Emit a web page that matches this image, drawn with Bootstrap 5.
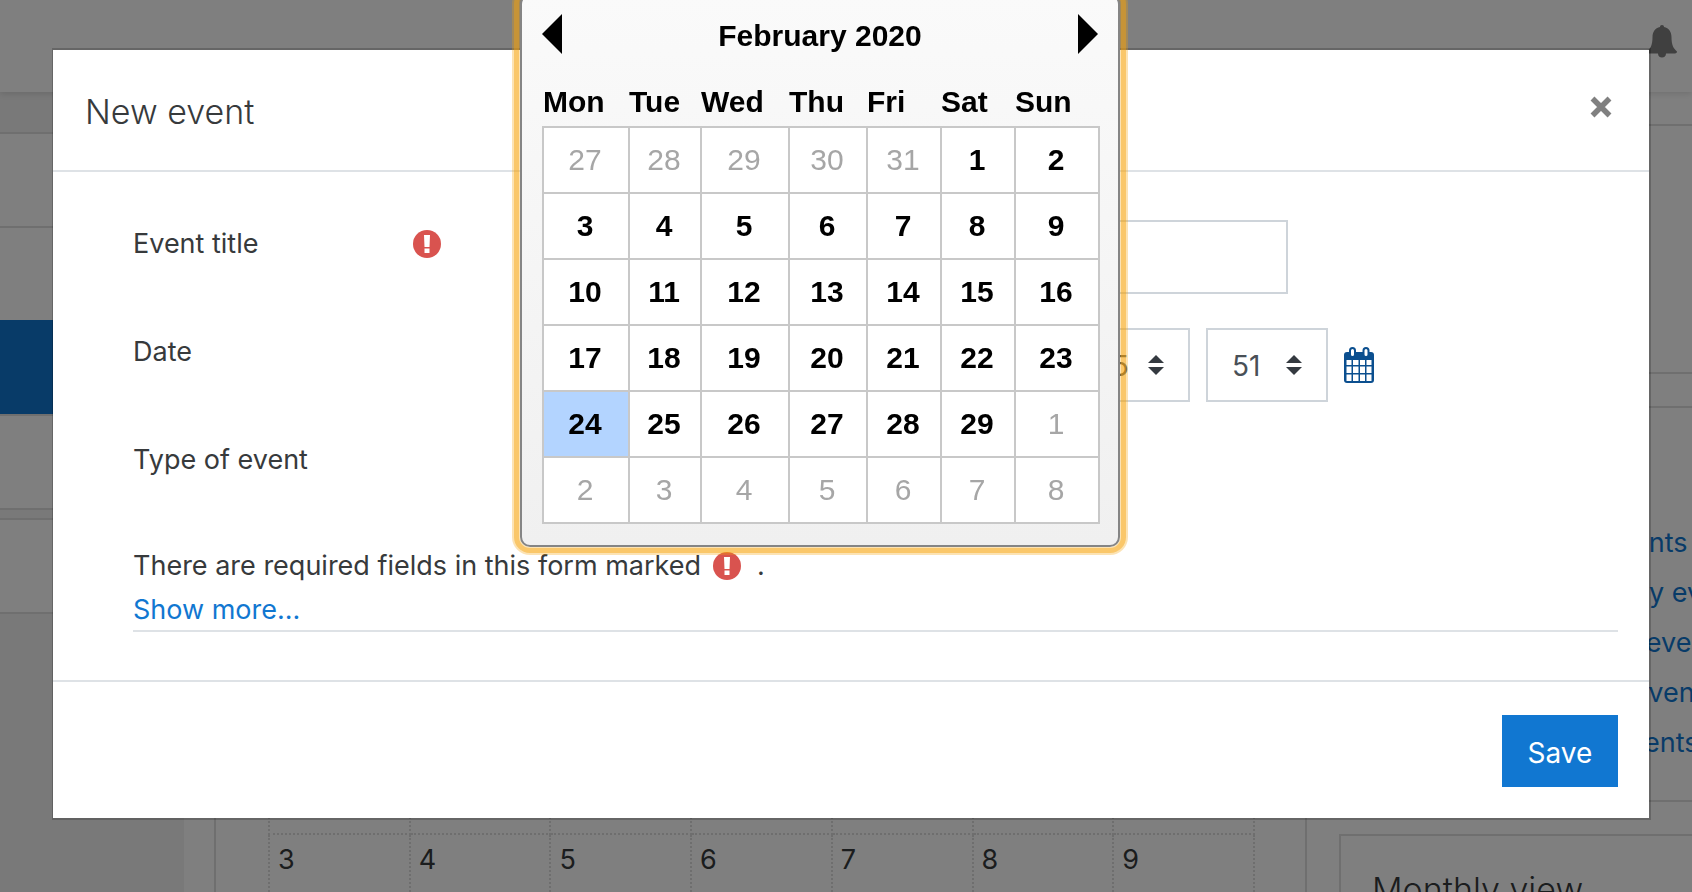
<!DOCTYPE html>
<html lang="en">
<head>
<meta charset="utf-8">
<meta name="viewport" content="width=device-width, initial-scale=1">
<title>New event</title>
<link href="https://cdn.jsdelivr.net/npm/bootstrap@5.3.0/dist/css/bootstrap.min.css" rel="stylesheet">
<style>
  :root { --line: #dfdfdf; --field: #ced4da; --brand: #1177d1; --ink: #373a3c; }
  body { font: 400 27px/44px Inter, "Liberation Sans", sans-serif; color: var(--ink); min-height: 100vh; overflow: hidden; background: #fff; }
  a { color: var(--brand); text-decoration: none; }
  .light-title { font-size: 34px; line-height: 44px; font-weight: 300; color: var(--ink); }

  /* page behind the dialog */
  .page { height: 100vh; overflow: hidden; }
  .topbar { flex: 0 0 92px; padding: 24px 14px; background: #fff; box-shadow: 0 2px 6px rgba(0,0,0,.12); position: relative; align-items: flex-start; }
  .drawer { flex: 0 0 184px; background: #f2f2f2; padding-top: 40px; }
  .drawer a { display: block; height: 94px; background: #fff; border-top: 2px solid var(--line); }
  .drawer a.current { background: var(--brand); border-color: var(--brand); }
  .drawer .section-end { border-bottom: 2px solid var(--line); height: 96px; }
  .drawer .section-end + a { margin-top: 8px; }
  .main-box { border: 2px solid var(--line); border-bottom: 0; margin: 32px 32px 0 30px; padding: 32px 50px 0 52px; }
  .month { table-layout: fixed; width: 100%; border-collapse: collapse; }
  .month th { height: 112px; }
  .month td { border: 2px dotted #dcdcdc; height: 141px; padding: 3px 8px; vertical-align: top; }
  .side { flex: 0 0 385px; min-width: 0; margin-right: -32px; padding-top: 32px; }
  .side-box { border: 2px solid var(--line); padding: 32px 31px; margin-bottom: 32px; white-space: nowrap; overflow: hidden; }
  .side-first { height: 250px; }
  .side-keys { height: 396px; padding-top: 110px; }
  .side-keys a { display: block; line-height: 50px; padding-left: 112px; }
  .shade { background: rgba(0,0,0,.5); }

  /* dialog */
  .event-dialog { max-width: none; margin: 48px 41px 0 52px; }
  .event-box { border: 2px solid rgba(0,0,0,.2); border-left-width: 1px; border-radius: 0; color: var(--ink); }
  .event-head { padding: 38px 24px 36px 32px; border-bottom: 2px solid #dee2e6; border-radius: 0; align-items: flex-start; height: 122px; }
  .event-head .light-title { padding-top: 2px; }
  .event-body { padding: 48px 31px 48px 80px; }
  .field-row { display: flex; min-height: 74px; margin-bottom: 34px; }
  .field-name { flex: 0 0 308px; margin-right: 105px; padding-top: 2px; height: 46px; }
  .box-field { border: 2px solid var(--field); border-radius: 0; height: 74px; color: #495057; font-size: 28px; background-color: #fff; }
  .title-field { width: 742px; }
  select.box-field { appearance: none; padding: 2px 24px 0; width: 122px;
    background-image: url("data:image/svg+xml,%3Csvg xmlns='http://www.w3.org/2000/svg' viewBox='0 0 16 20'%3E%3Cpath fill='%23343a40' d='M8 0L0 8h16zM8 20l8-8H0z'/%3E%3C/svg%3E");
    background-repeat: no-repeat; background-position: right 24px center; background-size: 16px 20px; }
  select.month-field { width: 216px; }
  select.year-field { width: 136px; }
  .plain-btn { border: 0; background: none; padding: 0; display: block; line-height: 0; }
  .notes { border-bottom: 2px solid #dee2e6; height: 88px; }
  .event-foot { padding: 33px 31px 31px; border-top: 2px solid #dee2e6; border-radius: 0; }
  .save-btn { background: var(--brand); border: 0; border-radius: 0; color: #fff; font-size: 28px; height: 72px; min-width: 116px; padding: 4px 20px 0; }

  /* date picker lying over the dialog */
  .picker { position: absolute; top: -6px; left: 520px; z-index: 1060; width: 600px; padding: 18px 20px 21px;
    font-family: "Liberation Sans", Arial, sans-serif; font-size: 30px; line-height: 34px; color: #000;
    border: 2px solid #858585; border-radius: 10px; background: linear-gradient(#fafafa, #f0f0f0);
    box-shadow: 0 0 0 8px rgba(245,163,7,.3); outline: 5px solid rgba(245,163,7,.43); outline-offset: 1px; }
  .picker-head { height: 40px; margin-bottom: 29px; font-weight: 700; }
  .picker-head span { padding-top: 4px; }
  .picker-days { table-layout: fixed; width: 100%; border-collapse: collapse; }
  .picker-days th { padding: 2px 0 0; height: 44px; vertical-align: top; text-align: left; }
  .picker-days td { border: 2px solid #c8c8c8; background: #fff; height: 66px; padding: 0 2px 0 0; text-align: center; font-weight: 700; }
  .picker-days td.off { font-weight: 400; color: #a6a6a6; }
  .picker-days td.picked { background: #b3d4ff; }
</style>
</head>
<body>

<div class="page d-flex flex-column">
  <header class="topbar d-flex justify-content-end">
    <button class="plain-btn" type="button" aria-label="Notifications">
      <svg width="32" height="34" viewBox="0 0 32 34" fill="#808080"><path d="M16 1c1.300 0 2 .8 2 2 5 1 7.500 5 7.500 10 0 8 2 11.500 5.500 14.500 0 1.200-.8 2-2 2h-9c0 2.500-1.600 4-4 4s-4-1.500-4-4H3c-1.200 0-2-.8-2-2C4.500 24.500 6.500 21 6.500 13c0-5 2.500-9 7.500-10 0-1.200.7-2 2-2z"/></svg>
    </button>
  </header>
  <div class="d-flex flex-grow-1">
    <nav class="drawer" aria-label="Site">
      <a href="#"></a><a href="#"></a><a href="#" class="current"></a><a href="#" class="section-end"></a><a href="#" class="section-end"></a>
    </nav>
    <main class="main-box flex-grow-1">
      <table class="month">
        <thead><tr><th></th><th></th><th></th><th></th><th></th><th></th><th></th></tr></thead>
        <tbody>
          <tr><td></td><td></td><td></td><td></td><td></td><td></td><td></td></tr>
          <tr><td></td><td></td><td></td><td></td><td></td><td></td><td></td></tr>
          <tr><td></td><td></td><td></td><td></td><td></td><td></td><td></td></tr>
          <tr><td></td><td></td><td></td><td></td><td></td><td></td><td></td></tr>
          <tr><td>3</td><td>4</td><td>5</td><td>6</td><td>7</td><td>8</td><td>9</td></tr>
        </tbody>
      </table>
    </main>
    <aside class="side">
      <section class="side-box side-first"></section>
      <section class="side-box side-keys">
        <a href="#">Hide site events</a>
        <a href="#">Hide category events</a>
        <a href="#">Hide course events</a>
        <a href="#">Hide group events</a>
        <a href="#">Hide user events</a>
      </section>
      <section class="side-box">
        <h2 class="light-title">Monthly view</h2>
      </section>
    </aside>
  </div>
</div>

<div class="modal shade d-block" tabindex="-1" role="dialog" aria-labelledby="dlg-title">
  <div class="modal-dialog event-dialog">
    <form class="modal-content event-box">
      <div class="modal-header event-head">
        <h1 class="light-title m-0" id="dlg-title">New event</h1>
        <button type="button" class="plain-btn" aria-label="Close">
          <svg width="48" height="40" viewBox="0 0 48 40"><path d="M15.500 10.500l17 17m0-17l-17 17" stroke="#808080" stroke-width="5.500" fill="none"/></svg>
        </button>
      </div>
      <div class="modal-body event-body">
        <div class="field-row">
          <div class="field-name d-flex justify-content-between align-items-center">
            <label for="ev-title">Event title</label>
            <svg width="28" height="28" viewBox="0 0 28 28" role="img" aria-label="Required"><circle cx="14" cy="14" r="14" fill="#d9534f"/><path fill="#fff" d="M11 5h6l-.5 12h-5zM11.500 18.500h5v4.500h-5z"/></svg>
          </div>
          <input class="box-field title-field" id="ev-title" type="text">
        </div>
        <div class="field-row">
          <div class="field-name"><label for="ev-day">Date</label></div>
          <div class="d-flex gap-3 align-items-center">
            <select class="box-field" id="ev-day" aria-label="Day"><option>24</option></select>
            <select class="box-field month-field" aria-label="Month"><option>February</option></select>
            <select class="box-field year-field" aria-label="Year"><option>2020</option></select>
            <select class="box-field" aria-label="Hour"><option>05</option></select>
            <select class="box-field" aria-label="Minute"><option>51</option></select>
            <button type="button" class="plain-btn" aria-label="Calendar">
              <svg width="30" height="36" viewBox="0 0 30 36"><path fill="#0b4f8f" d="M3 5h24q3 0 3 3v25q0 3-3 3H3q-3 0-3-3V8q0-3 3-3z"/><path fill="#fff" d="M2.500 13h5v5h-5zM9 13h5.500v5H9zM16 13h5v5h-5zM22.500 13h5v5h-5zM2.500 19.500h5V26h-5zM9 19.500h5.500V26H9zM16 19.500h5V26h-5zM22.500 19.500h5V26h-5zM2.500 27.500h5V34h-5zM9 27.500h5.500V34H9zM16 27.500h5V34h-5zM22.500 27.500h5V34h-5z"/><rect x="6" y="1" width="5" height="9" rx="2.500" fill="#fff" stroke="#0b4f8f" stroke-width="2"/><rect x="19.500" y="1" width="5" height="9" rx="2.500" fill="#fff" stroke="#0b4f8f" stroke-width="2"/></svg>
            </button>
          </div>
        </div>
        <div class="field-row">
          <div class="field-name">Type of event</div>
        </div>
        <div class="notes">
          <div class="d-flex align-items-center gap-2">
            <span>There are required fields in this form marked</span>
            <svg class="ms-1" width="28" height="28" viewBox="0 0 28 28" role="img" aria-label="Required"><circle cx="14" cy="14" r="14" fill="#d9534f"/><path fill="#fff" d="M11 5h6l-.5 12h-5zM11.500 18.500h5v4.500h-5z"/></svg>
            <span class="ms-2">.</span>
          </div>
          <a href="#">Show more...</a>
        </div>
      </div>
      <div class="modal-footer event-foot">
        <button type="submit" class="save-btn m-0">Save</button>
      </div>
    </form>
  </div>
</div>

<div class="picker" role="dialog" aria-label="Choose a date">
  <div class="picker-head d-flex justify-content-between align-items-center">
    <button type="button" class="plain-btn" aria-label="Previous month"><svg width="20" height="40"><path d="M20 0v40L0 20z"/></svg></button>
    <span>February 2020</span>
    <button type="button" class="plain-btn" aria-label="Next month"><svg width="20" height="40"><path d="M0 0v40l20-20z"/></svg></button>
  </div>
  <table class="picker-days">
    <colgroup><col style="width:86px"><col style="width:72px"><col style="width:88px"><col style="width:78px"><col style="width:74px"><col style="width:74px"><col style="width:84px"></colgroup>
    <thead><tr><th>Mon</th><th>Tue</th><th>Wed</th><th>Thu</th><th>Fri</th><th>Sat</th><th>Sun</th></tr></thead>
    <tbody>
      <tr><td class="off">27</td><td class="off">28</td><td class="off">29</td><td class="off">30</td><td class="off">31</td><td>1</td><td>2</td></tr>
      <tr><td>3</td><td>4</td><td>5</td><td>6</td><td>7</td><td>8</td><td>9</td></tr>
      <tr><td>10</td><td>11</td><td>12</td><td>13</td><td>14</td><td>15</td><td>16</td></tr>
      <tr><td>17</td><td>18</td><td>19</td><td>20</td><td>21</td><td>22</td><td>23</td></tr>
      <tr><td class="picked">24</td><td>25</td><td>26</td><td>27</td><td>28</td><td>29</td><td class="off">1</td></tr>
      <tr><td class="off">2</td><td class="off">3</td><td class="off">4</td><td class="off">5</td><td class="off">6</td><td class="off">7</td><td class="off">8</td></tr>
    </tbody>
  </table>
</div>

<script src="https://cdn.jsdelivr.net/npm/bootstrap@5.3.0/dist/js/bootstrap.bundle.min.js"></script>
</body>
</html>
